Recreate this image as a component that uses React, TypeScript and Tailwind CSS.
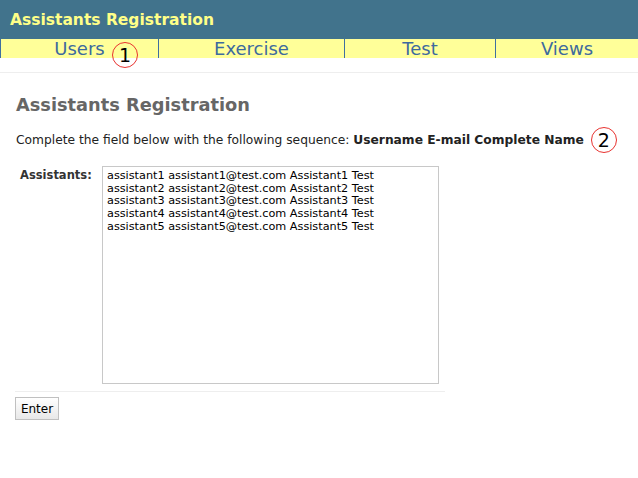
import React from 'react';

const tabs = [
  { label: 'Users', w: 'w-[158px]', mark: true },
  { label: 'Exercise', w: 'w-[186px]' },
  { label: 'Test', w: 'w-[151px]' },
  { label: 'Views', w: 'flex-1' },
];

const assistants = [1, 2, 3, 4, 5]
  .map((n) => `assistant${n} assistant${n}@test.com Assistant${n} Test`)
  .join('\n');

const Mark: React.FC<{ n: number }> = ({ n }) => (
  <span className="inline-flex h-[26px] w-[26px] items-center justify-center rounded-full border border-[#e8322f] text-[19px] leading-none text-black">
    {n}
  </span>
);

export default function App() {
  return (
    <div className="h-[478px] w-[638px] bg-white font-['DejaVu_Sans',sans-serif]">
      <div className="flex h-[39px] items-center bg-[#41738c] pl-[10px] pt-[2px]">
        <h1 className="text-[15.5px] font-bold text-[#ffff88]">Assistants Registration</h1>
      </div>
      <div className="flex h-[19px] bg-[#ffff99]">
        {tabs.map((t) => (
          <div
            key={t.label}
            className={`relative ${t.w} border-l border-[#3f6fa0] text-center text-[18px] leading-[20px] text-[#3d6a9e]`}
          >
            {t.label}
            {t.mark && (
              <span className="absolute left-[111px] top-[3px]">
                <Mark n={1} />
              </span>
            )}
          </div>
        ))}
      </div>
      <div className="mt-[14px] border-t border-[#eeeeee]" />
      <div className="pl-[15px]">
        <h2 className="ml-[1px] mt-[19px] text-[17.8px] font-bold leading-[26px] text-[#666666]">Assistants Registration</h2>
        <div className="ml-[1px] mt-[9px] flex items-center text-[12.25px] text-[#222222]">
          <span>
            Complete the field below with the following sequence:{' '}
            <b>Username E-mail Complete Name</b>
          </span>
          <span className="ml-[7px]">
            <Mark n={2} />
          </span>
        </div>
        <div className="mt-[13px] flex">
          <label className="w-[87px] pl-[5px] pt-[1px] text-[11.5px] font-bold text-[#333333]">Assistants:</label>
          <textarea
            readOnly
            value={assistants}
            className="h-[218px] w-[337px] resize-none border border-[#c8c8c8] px-[4px] py-[3px] text-[11.25px] leading-[12.7px] text-black outline-none font-['DejaVu_Sans',sans-serif]"
          />
        </div>
        <div className="mt-[7px] w-[430px] border-t border-[#eeeeee]" />
        <button className="mt-[5px] h-[23px] w-[44px] border border-[#c0c0c0] bg-gradient-to-b from-white to-[#e8e8e8] text-[12px] text-black">
          Enter
        </button>
      </div>
    </div>
  );
}
